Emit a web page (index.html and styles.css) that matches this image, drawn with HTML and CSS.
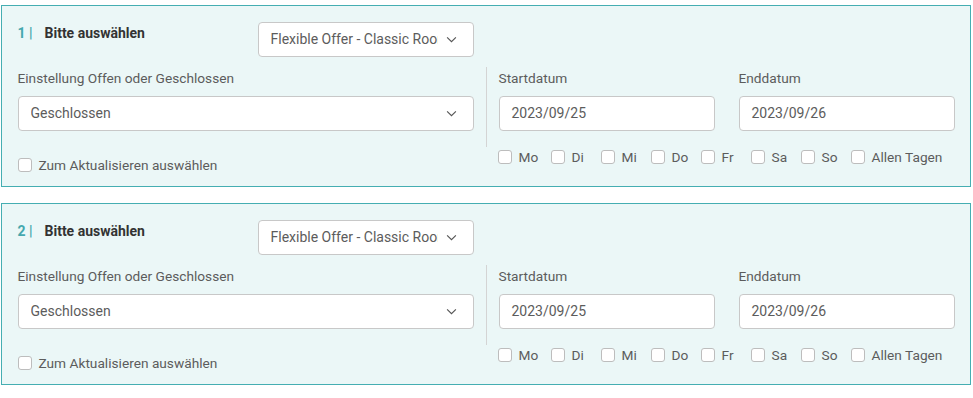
FILE: index.html
```html
<!DOCTYPE html>
<html lang="de">
<head>
<meta charset="utf-8">
<title>Einstellungen</title>
<link rel="stylesheet" href="styles.css">
</head>
<body>
<div class="page">
  <section class="card">
    <div class="pair head">
      <div class="title"><span class="num">1 |</span><span class="title-text">Bitte auswählen</span></div>
      <div class="select"><span class="val">Flexible Offer - Classic Room</span><svg class="chev" viewBox="0 0 12 8"><path d="M1 1.5 6 6.5 11 1.5" fill="none" stroke="#555" stroke-width="1.3"/></svg></div>
    </div>
    <div class="cell">
      <div class="label">Einstellung Offen oder Geschlossen</div>
      <div class="select"><span class="val">Geschlossen</span><svg class="chev" viewBox="0 0 12 8"><path d="M1 1.5 6 6.5 11 1.5" fill="none" stroke="#555" stroke-width="1.3"/></svg></div>
    </div>
    <div class="dates pair">
      <div class="field"><div class="label">Startdatum</div><div class="input">2023/09/25</div></div>
      <div class="field"><div class="label">Enddatum</div><div class="input">2023/09/26</div></div>
    </div>
    <label class="check update"><span class="box"></span>Zum Aktualisieren auswählen</label>
    <div class="days">
      <label class="check"><span class="box"></span>Mo</label>
      <label class="check"><span class="box"></span>Di</label>
      <label class="check"><span class="box"></span>Mi</label>
      <label class="check"><span class="box"></span>Do</label>
      <label class="check"><span class="box"></span>Fr</label>
      <label class="check"><span class="box"></span>Sa</label>
      <label class="check"><span class="box"></span>So</label>
      <label class="check"><span class="box"></span>Allen Tagen</label>
    </div>
  </section>
  <section class="card">
    <div class="pair head">
      <div class="title"><span class="num">2 |</span><span class="title-text">Bitte auswählen</span></div>
      <div class="select"><span class="val">Flexible Offer - Classic Room</span><svg class="chev" viewBox="0 0 12 8"><path d="M1 1.5 6 6.5 11 1.5" fill="none" stroke="#555" stroke-width="1.3"/></svg></div>
    </div>
    <div class="cell">
      <div class="label">Einstellung Offen oder Geschlossen</div>
      <div class="select"><span class="val">Geschlossen</span><svg class="chev" viewBox="0 0 12 8"><path d="M1 1.5 6 6.5 11 1.5" fill="none" stroke="#555" stroke-width="1.3"/></svg></div>
    </div>
    <div class="dates pair">
      <div class="field"><div class="label">Startdatum</div><div class="input">2023/09/25</div></div>
      <div class="field"><div class="label">Enddatum</div><div class="input">2023/09/26</div></div>
    </div>
    <label class="check update"><span class="box"></span>Zum Aktualisieren auswählen</label>
    <div class="days">
      <label class="check"><span class="box"></span>Mo</label>
      <label class="check"><span class="box"></span>Di</label>
      <label class="check"><span class="box"></span>Mi</label>
      <label class="check"><span class="box"></span>Do</label>
      <label class="check"><span class="box"></span>Fr</label>
      <label class="check"><span class="box"></span>Sa</label>
      <label class="check"><span class="box"></span>So</label>
      <label class="check"><span class="box"></span>Allen Tagen</label>
    </div>
  </section>
</div>
</body>
</html>
```
FILE: styles.css
```css
* { box-sizing: border-box; }
html, body { margin: 0; background: #fff; }
body {
  font-family: Roboto, "Liberation Sans", Arial, sans-serif;
  font-size: 14px;
  color: #5c5c5c;
}
.page {
  padding: 5px 2px 0 1px;
  display: flex;
  flex-direction: column;
  gap: 16px;
}
.card {
  border: 1.5px solid #45aeb2;
  background: #ebf7f7;
  height: 182px;
  padding: 15.5px 15px 0 15.5px;
  display: grid;
  grid-template-columns: 456px 1fr;
  grid-template-rows: 35px auto auto;
  column-gap: 12px;
  align-items: start;
  align-content: start;
}
.pair {
  display: grid;
  grid-template-columns: 216px 216px;
  column-gap: 24px;
}
.head { grid-column: 1; grid-row: 1; height: 35px; }
.title {
  display: flex;
  align-items: flex-start;
  padding-top: 1px;
  font-weight: bold;
  font-size: 14px;
  line-height: 20px;
}
.num { color: #45a8ae; width: 27px; }
.title-text { color: #333; }
.cell { grid-column: 1; grid-row: 2; margin-top: 10px; }
.label {
  height: 22px;
  line-height: 22px;
  margin-bottom: 7px;
  color: #5c5c5c;
  font-size: 13.7px;
  white-space: nowrap;
}
.select, .input {
  height: 35px;
  background: #fff;
  border: 1px solid #c8c8c8;
  border-radius: 4px;
  display: flex;
  align-items: center;
  padding: 0 12px;
  color: #5c5c5c;
  font-size: 14px;
}
.select { padding-right: 16px; }
.select .val {
  flex: 1;
  white-space: nowrap;
  overflow: hidden;
  text-overflow: clip;
}
.select .chev { width: 11px; height: 7px; flex: none; margin-left: 8px; }
.dates {
  grid-column: 2;
  grid-row: 2;
  margin-top: 10px;
  border-left: 1px solid #d4d4d4;
  padding-left: 12px;
  padding-bottom: 16px;
}
.check {
  display: flex;
  align-items: center;
  color: #5c5c5c;
  font-size: 13.7px;
  line-height: 20px;
  white-space: nowrap;
}
.box {
  width: 14px;
  height: 14px;
  border: 1px solid #bdbdbd;
  border-radius: 3px;
  background: #fff;
  margin-right: 7px;
  flex: none;
}
.update { grid-column: 1; grid-row: 3; margin-top: 8px; }
.days {
  grid-column: 2;
  grid-row: 3;
  display: flex;
  padding-left: 12px;
}
.days .check { width: 50px; }
.days .check:first-child { width: 53px; }
.days .check:last-child { width: auto; }
```
